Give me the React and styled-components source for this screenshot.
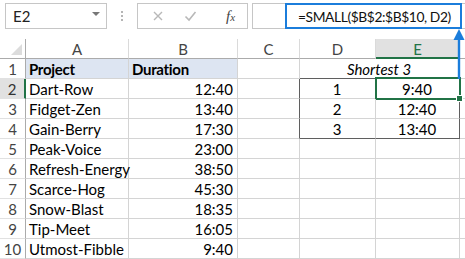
import React from 'react';
import styled, { createGlobalStyle, css } from 'styled-components';

const GlobalStyle = createGlobalStyle`
  html, body {
    margin: 0;
    padding: 0;
    background: #fff;
  }
  body {
    font-family: Lato, "Liberation Sans", sans-serif;
    color: #000;
  }
`;

const GREEN = '#217346';
const GRID = '#d4d4d4';
const DARK = '#5f5f5f';
const BLUE = '#1b7ddb';

const Sheet = styled.div`
  position: relative;
  width: 465px;
  height: 259px;
  overflow: hidden;
  background: #fff;
`;

const Toolbar = styled.div`
  display: flex;
  align-items: flex-start;
  height: 39px;
  box-sizing: border-box;
  padding: 3px 0 0 5px;
`;

const Box = styled.div`
  box-sizing: border-box;
  height: 26px;
  border: 1px solid #c6c6c6;
  background: #fff;
  display: flex;
  align-items: center;
`;

const NameBox = styled(Box)`
  width: 102px;
  padding: 0 6px 0 7px;
  justify-content: space-between;
  font-size: 15px;
  color: #222;
`;

const DropArrow = styled.span`
  width: 0;
  height: 0;
  border-left: 4px solid transparent;
  border-right: 4px solid transparent;
  border-top: 4px solid #777;
  margin-top: -4px;
`;

const Grip = styled.div`
  width: 30px;
  height: 26px;
  display: flex;
  flex-direction: column;
  align-items: center;
  justify-content: center;
  gap: 2px;
  & > span {
    width: 2px;
    height: 2px;
    background: #b5b5b5;
  }
`;

const ButtonsBox = styled(Box)`
  width: 111px;
  padding: 0 0 0 14px;
  gap: 20px;
`;

const Fx = styled.span`
  font-family: "Liberation Serif", serif;
  font-style: italic;
  font-size: 15px;
  color: #444;
  margin-left: 9px;
  & > small {
    font-size: 11px;
  }
`;

const FormulaBox = styled(Box)`
  flex: 1;
  min-width: 0;
  margin-left: 4px;
  border-right: none;
  padding-left: 45px;
  font-size: 13.8px;
  letter-spacing: -0.4px;
  white-space: nowrap;
  overflow: hidden;
  color: #111;
`;

const Grid = styled.div`
  display: grid;
  grid-template-columns: 26px 103px 109px 62px 76px 84px 1fr;
  grid-auto-rows: 20px;
`;

const Cell = styled.div`
  position: relative;
  box-sizing: border-box;
  display: flex;
  align-items: center;
  padding: 1px 4px 0 3px;
  font-size: 15px;
  white-space: nowrap;
  border-right: 1px solid ${p => (p.$rightDark ? DARK : GRID)};
  border-bottom: 1px solid ${p => (p.$bottomDark ? DARK : GRID)};
  justify-content: ${p => p.$align || 'flex-start'};
  ${p => p.$span && css`grid-column: span ${p.$span};`}
  ${p => p.$head && css`
    background: #dde5f2;
    font-weight: 700;
    letter-spacing: -0.3px;
  `}
  ${p => p.$italic && css`font-style: italic;`}
  ${p => p.$selected && css`
    &::after {
      content: '';
      position: absolute;
      left: -1px;
      top: -2px;
      right: -2px;
      bottom: -2px;
      border: 2px solid ${GREEN};
      pointer-events: none;
    }
    &::before {
      content: '';
      position: absolute;
      right: -4px;
      bottom: -4px;
      width: 5px;
      height: 5px;
      background: ${GREEN};
      border: 1px solid #fff;
      z-index: 2;
    }
  `}
`;

const ColHead = styled.div`
  box-sizing: border-box;
  display: flex;
  align-items: center;
  justify-content: center;
  padding-top: 1px;
  font-size: 15px;
  color: ${p => (p.$active ? GREEN : '#444')};
  background: ${p => (p.$active ? '#e1e1e1' : '#fff')};
  border-right: 1px solid #dadada;
  border-bottom: ${p => (p.$active ? `2px solid ${GREEN}` : '1px solid #ababab')};
`;

const Corner = styled(ColHead)`
  align-items: flex-end;
  justify-content: flex-end;
  padding: 0 3px 3px 0;
  border-right: 1px solid #ababab;
`;

const RowHead = styled.div`
  box-sizing: border-box;
  display: flex;
  align-items: center;
  justify-content: center;
  padding-top: 1px;
  font-size: 15px;
  color: ${p => (p.$active ? '#333' : '#444')};
  background: ${p => (p.$active ? '#e1e1e1' : '#fff')};
  border-bottom: 1px solid #e1e1e1;
  border-right: ${p => (p.$active ? `2px solid ${GREEN}` : '1px solid #ababab')};
`;

const Callout = styled.div`
  position: absolute;
  left: 285px;
  top: 3px;
  width: 177px;
  height: 26px;
  box-sizing: border-box;
  border: 2px solid ${BLUE};
  pointer-events: none;
`;

const Arrow = styled.svg`
  position: absolute;
  left: 452px;
  top: 28px;
  pointer-events: none;
`;

const projects = [
  ['Dart-Row', '12:40'],
  ['Fidget-Zen', '13:40'],
  ['Gain-Berry', '17:30'],
  ['Peak-Voice', '23:00'],
  ['Refresh-Energy', '38:50'],
  ['Scarce-Hog', '45:30'],
  ['Snow-Blast', '18:35'],
  ['Tip-Meet', '16:05'],
  ['Utmost-Fibble', '9:40'],
];

const shortest = ['9:40', '12:40', '13:40'];

export default function App() {
  return (
    <Sheet>
      <GlobalStyle />
      <Toolbar>
        <NameBox>
          <span>E2</span>
          <DropArrow />
        </NameBox>
        <Grip><span /><span /><span /></Grip>
        <ButtonsBox>
          <svg width="12" height="12" viewBox="0 0 12 12">
            <path d="M2 2 L10 10 M10 2 L2 10" stroke="#b8b8b8" strokeWidth="1.4" fill="none" />
          </svg>
          <svg width="13" height="12" viewBox="0 0 13 12">
            <path d="M1.5 6.5 L5 10 L11.5 2" stroke="#b8b8b8" strokeWidth="1.6" fill="none" />
          </svg>
          <Fx>f<small>x</small></Fx>
        </ButtonsBox>
        <FormulaBox>=SMALL($B$2:$B$10, D2)</FormulaBox>
      </Toolbar>

      <Grid>
        <Corner>
          <svg width="11" height="11" viewBox="0 0 11 11">
            <path d="M11 0 L11 11 L0 11 Z" fill="#dcdcdc" />
          </svg>
        </Corner>
        {['A', 'B', 'C', 'D', 'E', ''].map(l => (
          <ColHead key={l} $active={l === 'E'}>{l}</ColHead>
        ))}

        <RowHead>1</RowHead>
        <Cell $head>Project</Cell>
        <Cell $head>Duration</Cell>
        <Cell />
        <Cell $span={2} $align="center" $italic $bottomDark>Shortest 3</Cell>
        <Cell />

        {projects.map(([name, time], i) => {
          const row = i + 2;
          const inBox = row <= 4;
          return (
            <React.Fragment key={name}>
              <RowHead $active={row === 2}>{row}</RowHead>
              <Cell>{name}</Cell>
              <Cell $align="flex-end">{time}</Cell>
              <Cell $rightDark={inBox} />
              <Cell $align="center" $bottomDark={row === 4}>{inBox ? row - 1 : ''}</Cell>
              <Cell
                $align="center"
                $rightDark={inBox}
                $bottomDark={row === 4}
                $selected={row === 2}
              >
                {inBox ? shortest[row - 2] : ''}
              </Cell>
              <Cell />
            </React.Fragment>
          );
        })}
      </Grid>

      <Callout />
      <Arrow width="14" height="52" viewBox="0 0 14 52">
        <path d="M7 8 L7 51" stroke={BLUE} strokeWidth="2.4" />
        <path d="M1.5 12 L7 1 L12.5 12 Z" fill={BLUE} />
      </Arrow>
    </Sheet>
  );
}
